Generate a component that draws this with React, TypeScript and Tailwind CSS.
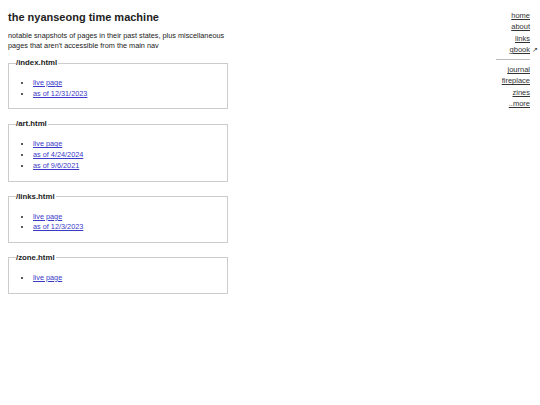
import React from 'react';

const snapshots = [
    { page: '/index.html', links: ['live page', 'as of 12/31/2023'] },
    { page: '/art.html', links: ['live page', 'as of 4/24/2024', 'as of 9/6/2021'] },
    { page: '/links.html', links: ['live page', 'as of 12/3/2023'] },
    { page: '/zone.html', links: ['live page'] },
];

const mainNav = ['home', 'about', 'links'];
const extraNav = ['journal', 'fireplace', 'zines', '..more'];

export default function App() {
    return (
        <div className="relative min-h-[405px] w-[540px] bg-white text-[#222] font-['Liberation_Sans',Arial,sans-serif]">
            {/* Side nav */}
            <nav className="absolute right-[10px] top-[10px] flex flex-col items-end text-[7.5px] leading-[11.3px] text-[#333]">
                {mainNav.map(item => (
                    <a key={item} href="#" className="underline">{item}</a>
                ))}
                <span className="relative">
                    <a href="#" className="underline">gbook</a>
                    <span className="absolute left-[calc(100%+2px)] top-0 text-[7px]">↗</span>
                </span>
                <hr className="w-[34px] border-t border-[#bbb] my-[4px]" />
                {extraNav.map(item => (
                    <a key={item} href="#" className="underline">{item}</a>
                ))}
            </nav>

            <main className="w-[220px] ml-[8px] pt-[10px]">
                <h1 className="text-[11px] font-bold leading-[14px]">the nyanseong time machine</h1>
                <p className="mt-[7px] text-[7.3px] leading-[10px]">
                    notable snapshots of pages in their past states, plus miscellaneous pages that aren't accessible from the main nav
                </p>

                <div className="flex flex-col gap-[10px] mt-[7px]">
                    {snapshots.map(s => (
                        <fieldset key={s.page} className="border border-[#ccc] px-[7px] pb-[9px]">
                            <legend className="font-bold text-[7.8px] leading-[10px] pr-[1px]">{s.page}</legend>
                            <ul className="list-disc pl-[16px] mt-[10px] text-[7.3px] leading-[10.7px]">
                                {s.links.map(l => (
                                    <li key={l} className="pl-[1px]">
                                        <a href="#" className="text-[#3a3ac8] underline">{l}</a>
                                    </li>
                                ))}
                            </ul>
                        </fieldset>
                    ))}
                </div>
            </main>
        </div>
    );
}
